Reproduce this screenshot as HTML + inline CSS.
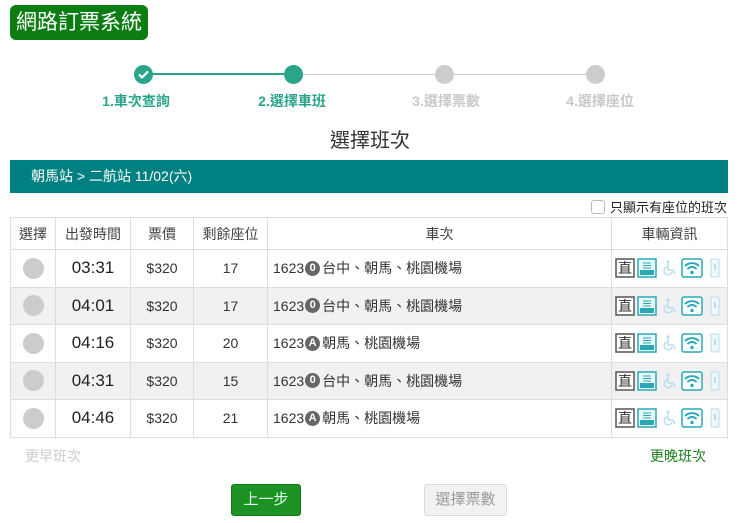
<!DOCTYPE html>
<html><head><meta charset="utf-8"><style>
*{margin:0;padding:0;box-sizing:border-box}
body{width:740px;height:523px;background:#fff;font-family:"Liberation Sans","Noto Sans CJK TC",sans-serif;position:relative;overflow:hidden;color:#333}
.a{position:absolute}
.logo{left:10px;top:5px;width:138px;height:35px;background:#0b7d12;border-radius:6px;color:#fff;font-size:21px;line-height:35px;text-align:center}
.line{height:2px;top:73px}
.dot{width:19px;height:19px;border-radius:50%;top:65px}
.lbl{top:91px;font-size:14px;font-weight:bold;width:120px;text-align:center}
table{position:absolute;left:10px;top:217px;width:718px;border-collapse:collapse;font-size:14px}
td,th{border:1px solid #ddd;text-align:center;font-weight:normal}
th{height:32px;color:#444}
td{height:37.5px}
tr.g td{background:#f1f1f1}
.r{display:inline-block;width:21px;height:21px;border-radius:50%;background:#ccc;vertical-align:middle}
.tm{font-size:17px;color:#222}
.tr{text-align:left;padding-left:5px}
.tr span,.tr i{vertical-align:middle}
.tr i{font-style:normal}
.b{display:inline-block;width:15px;height:15px;border-radius:50%;background:#666;color:#fff;font-family:"Liberation Sans",sans-serif;font-size:11px;line-height:15px;text-align:center;margin:0 2px 0 1px;font-weight:bold}
.ic{display:flex;gap:2px;justify-content:center;align-items:center}
</style></head><body>
<div class="a logo">網路訂票系統</div>
<div class="a line" style="left:143px;width:150px;background:#2aa58a"></div>
<div class="a line" style="left:293px;width:302px;background:#ccc;height:1px;top:74px"></div>
<div class="a dot" style="left:134px;background:#2aa58a"><svg width="19" height="19"><path d="M5 9.5l3 3 6-6" stroke="#fff" stroke-width="2.2" fill="none"/></svg></div>
<div class="a dot" style="left:284px;background:#2aa58a"></div>
<div class="a dot" style="left:435px;background:#ccc"></div>
<div class="a dot" style="left:586px;background:#ccc"></div>
<div class="a lbl" style="left:76px;color:#2aa58a">1.車次查詢</div>
<div class="a lbl" style="left:232px;color:#2aa58a">2.選擇車班</div>
<div class="a lbl" style="left:386px;color:#c8c8c8">3.選擇票數</div>
<div class="a lbl" style="left:540px;color:#c8c8c8">4.選擇座位</div>
<div class="a" style="left:0;width:740px;top:124px;text-align:center;font-size:20px;color:#333">選擇班次</div>
<div class="a" style="left:10px;top:160px;width:718px;height:33px;background:#008080;color:#fff;font-size:14px;line-height:33px;padding-left:21px">朝馬站 &gt; 二航站 11/02(六)</div>
<div class="a" style="left:591px;top:197px;font-size:13px;color:#222;display:flex;align-items:center"><span style="width:14px;height:14px;border:1px solid #bbb;border-radius:3px;display:inline-block;margin-right:5px"></span>只顯示有座位的班次</div>
<table>
<tr><th style="width:45px">選擇</th><th style="width:75px">出發時間</th><th style="width:63px">票價</th><th style="width:74px">剩餘座位</th><th>車次</th><th style="width:116px">車輛資訊</th></tr>
<tr><td><span class="r"></span></td><td class="tm">03:31</td><td>$320</td><td>17</td><td class="tr"><i>1623</i><span class="b">0</span><i>台中、朝馬、桃園機場</i></td><td><div class="ic">ICONS</div></td></tr>
<tr class="g"><td><span class="r"></span></td><td class="tm">04:01</td><td>$320</td><td>17</td><td class="tr"><i>1623</i><span class="b">0</span><i>台中、朝馬、桃園機場</i></td><td><div class="ic">ICONS</div></td></tr>
<tr><td><span class="r"></span></td><td class="tm">04:16</td><td>$320</td><td>20</td><td class="tr"><i>1623</i><span class="b">A</span><i>朝馬、桃園機場</i></td><td><div class="ic">ICONS</div></td></tr>
<tr class="g"><td><span class="r"></span></td><td class="tm">04:31</td><td>$320</td><td>15</td><td class="tr"><i>1623</i><span class="b">0</span><i>台中、朝馬、桃園機場</i></td><td><div class="ic">ICONS</div></td></tr>
<tr><td><span class="r"></span></td><td class="tm">04:46</td><td>$320</td><td>21</td><td class="tr"><i>1623</i><span class="b">A</span><i>朝馬、桃園機場</i></td><td><div class="ic">ICONS</div></td></tr>
</table>
<div class="a" style="left:25px;top:446px;font-size:14px;color:#ccc">更早班次</div>
<div class="a" style="left:650px;top:446px;font-size:14px;color:#1a7d1a">更晚班次</div>
<div class="a" style="left:231px;top:484px;width:70px;height:32px;background:#1c9124;border:1px solid #147a1a;border-radius:3px;color:#dfe;font-size:15px;line-height:30px;text-align:center">上一步</div>
<div class="a" style="left:424px;top:484px;width:83px;height:32px;background:#f2f2f2;border:1px solid #ddd;border-radius:3px;color:#999;font-size:15px;line-height:30px;text-align:center">選擇票數</div>
<script>
var ic='<svg width="20" height="20"><rect x="1" y="1" width="18" height="18" fill="#fff" stroke="#555" stroke-width="1.5"/><text x="10" y="15" font-size="14" text-anchor="middle" fill="#333" font-family="Noto Sans CJK TC">直</text></svg>'+
'<svg width="20" height="20"><rect x="1" y="1" width="18" height="18" fill="#e8f8fa" stroke="#2aa8b8" stroke-width="1.5"/><path d="M6 5h8M6 7.5h8M6 10h8" stroke="#2aa8b8"/><rect x="3" y="12" width="14" height="5" fill="#2aa8b8"/></svg>'+
'<svg width="20" height="20"><circle cx="9" cy="4" r="1.6" fill="#bde"/><path d="M9 6v6h5l2 4M8 9a4 4 0 1 0 5 5" stroke="#bde" stroke-width="1.5" fill="none"/></svg>'+
'<svg width="22" height="20"><rect x="1" y="1" width="20" height="18" rx="2" fill="#fff" stroke="#2aa8b8" stroke-width="1.5"/><path d="M4 8a10 10 0 0 1 14 0M6.5 11a6 6 0 0 1 9 0" stroke="#2aa8b8" stroke-width="2" fill="none"/><circle cx="11" cy="14.5" r="1.7" fill="#2aa8b8"/></svg>'+
'<svg width="20" height="20"><rect x="6" y="1" width="8" height="18" rx="1" fill="#eef8f8" stroke="#bde" /><path d="M10 6v6" stroke="#bde" stroke-width="2"/></svg>';
document.querySelectorAll('.ic').forEach(function(e){e.innerHTML=ic});
</script>
</body></html>
